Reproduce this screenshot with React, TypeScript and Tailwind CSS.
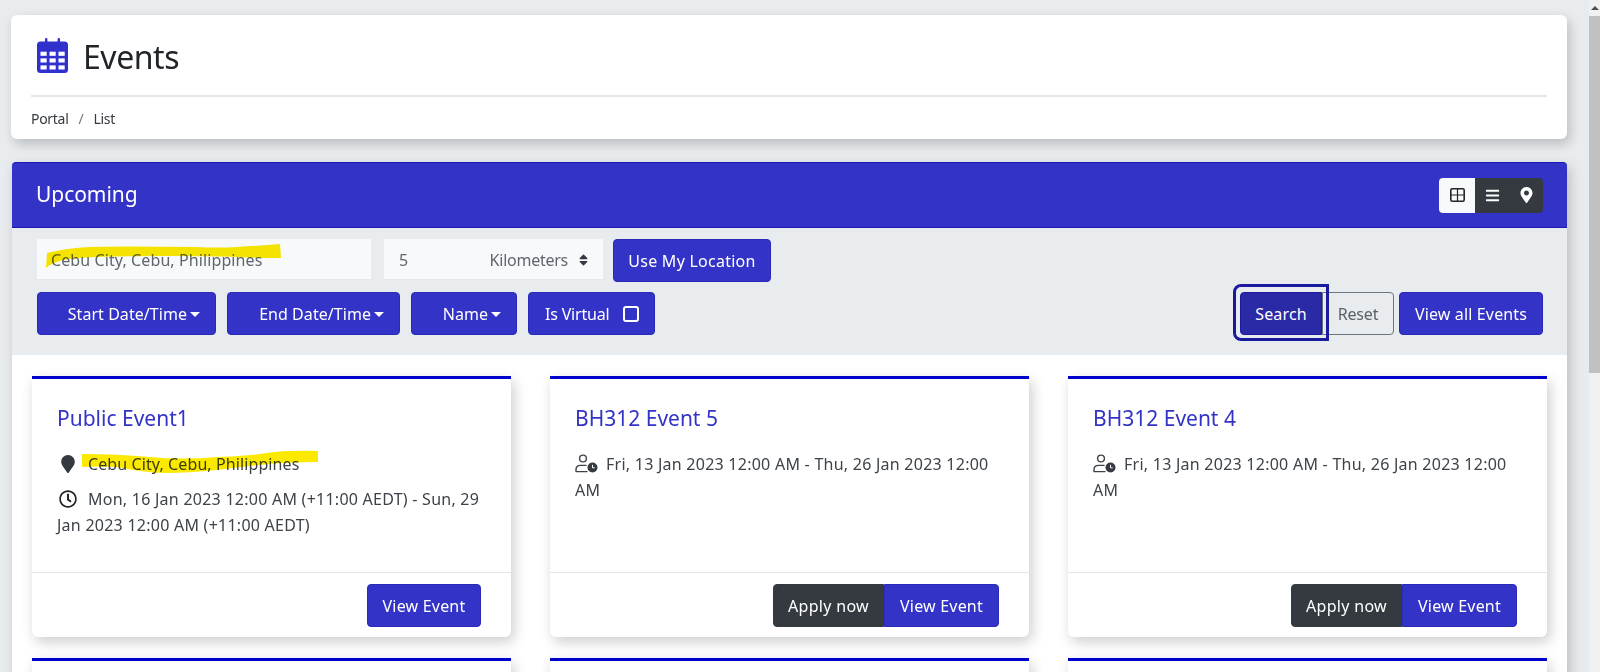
import { FaBars, FaMapMarker, FaMapMarkerAlt, FaRegClock, FaSort } from 'react-icons/fa';

const btn = 'flex items-center bg-[#3333c7] border border-[#2a2ab8] text-white text-base h-[43px] pt-px';

function Caret() {
  return <span className="ml-[3px] w-0 h-0 border-x-[5px] border-x-transparent border-t-[5px] border-t-white" />;
}

function Dropdown({ label, width }: { label: string; width: string }) {
  return (
    <button className={`${btn} ${width} rounded justify-end pr-[15px] tracking-[0.05px]`}>
      {label}
      <Caret />
    </button>
  );
}

function CalendarIcon() {
  const cols = [3.5, 12.5, 21.5];
  const rows = [13.7, 20.4, 27.4];
  return (
    <svg viewBox="0 0 31 35" className="w-[31px] h-[35px] shrink-0">
      <rect x="8" y="0" width="2.4" height="7" rx="1" fill="#3333c7" />
      <rect x="20.6" y="0" width="2.4" height="7" rx="1" fill="#3333c7" />
      <rect x="0" y="3.5" width="31" height="31.5" rx="3.5" fill="#3030cc" />
      {cols.map((x) => rows.map((y) => <rect key={`${x}-${y}`} x={x} y={y} width="6.2" height="4.1" fill="#fff" />))}
    </svg>
  );
}

function GridIcon() {
  return (
    <svg viewBox="0 0 15 14" className="w-[15px] h-[14px]">
      <rect x="0.8" y="0.8" width="13.4" height="12.4" rx="1.5" fill="none" stroke="#212529" strokeWidth="1.6" />
      <path d="M7.5 1v12M1 7h13" stroke="#212529" strokeWidth="1.2" />
    </svg>
  );
}

function UserClock() {
  return (
    <svg viewBox="0 0 23 19" className="w-[23px] h-[19px] shrink-0 inline-block align-[-3px]">
      <circle cx="8" cy="4.5" r="3.4" fill="none" stroke="#3d4349" strokeWidth="1.4" />
      <path d="M1 17.6v-2c0-2.6 2-4.2 4.6-4.2h5.4M1 17.6h11" fill="none" stroke="#3d4349" strokeWidth="1.4" strokeLinecap="round" />
      <circle cx="17.5" cy="13.5" r="5" fill="#343a40" />
      <path d="M17.5 10.8v3h2.2" fill="none" stroke="#fff" strokeWidth="1" />
    </svg>
  );
}

function CardFooter({ apply }: { apply?: boolean }) {
  return (
    <div className="h-[65px] border-t border-[#e6e6e6] flex items-center justify-end pr-[30px]">
      {apply && (
        <button className="h-[43px] w-[111px] pt-px bg-[#343a40] text-white text-base tracking-[0.3px] rounded-l border border-[#343a40]">Apply now</button>
      )}
      <button className={`${btn} ${apply ? 'w-[115px] rounded-r' : 'w-[114px] rounded'} justify-center tracking-[0.2px]`}>View Event</button>
    </div>
  );
}

function EventCard({ title, apply, children }: { title: string; apply?: boolean; children?: React.ReactNode }) {
  return (
    <div className="h-[261px] bg-white border-t-[3px] border-[#0000cc] rounded-b-md shadow-[3px_5px_14px_rgba(0,0,0,0.2)] flex flex-col">
      <div className="flex-1 px-[25px] pt-[24px] text-base leading-[26px] text-[#3d4349] tracking-[0.25px]">
        <h3 className="text-[21px] leading-[30px] text-[#3333c7] tracking-[0px] mb-[18px]">{title}</h3>
        {children}
      </div>
      <CardFooter apply={apply} />
    </div>
  );
}

function NextCard() {
  return <div className="h-[40px] bg-white border-t-[3px] border-[#0000cc] shadow-[3px_5px_14px_rgba(0,0,0,0.2)]" />;
}

export default function App() {
  return (
    <div className="h-[672px] w-full overflow-hidden flex bg-[#e9ecef] tracking-[0.15px]" style={{ fontFamily: '"Noto Sans", "Open Sans", sans-serif' }}>
      <div className="flex-1 min-w-0 pt-[15px] pl-[11px] pr-[22px]">
        <div className="h-[124px] bg-white rounded-md shadow-[3px_5px_12px_rgba(0,0,0,0.2)] px-[20px] flex flex-col">
          <div className="h-[82px] border-b-2 border-[#e4e6ea] flex items-center pl-[6px]">
            <CalendarIcon />
            <h1 className="ml-[15px] mt-[3px] text-[32px] text-[#212529] tracking-[-0.45px]">Events</h1>
          </div>
          <div className="flex-1 flex items-center gap-[10px] text-sm text-[#343a40] tracking-[-0.3px] pt-px">
            <span>Portal</span>
            <span className="text-[#6c757d]">/</span>
            <span>List</span>
          </div>
        </div>

        <div className="mt-[23px] ml-px shadow-[3px_5px_12px_rgba(0,0,0,0.2)]">
          <div className="h-[66px] bg-[#3333c7] border-y border-[#1a1ab8] rounded-t-sm flex items-center justify-between pl-[24px] pr-[24px]">
            <h2 className="text-[21px] text-white tracking-[-0.05px]">Upcoming</h2>
            <div className="flex h-[35px] w-[104px] rounded overflow-hidden bg-[#343a40] text-white">
              <span className="w-[36px] bg-[#f8f9fa] flex items-center justify-center"><GridIcon /></span>
              <span className="w-[34px] flex items-center justify-center"><FaBars className="w-[15px] h-[15px]" /></span>
              <span className="w-[34px] flex items-center justify-center"><FaMapMarkerAlt className="w-[13px] h-[16px]" /></span>
            </div>
          </div>

          <div className="h-[127px] bg-[#e9ecef] pl-[25px] pr-[24px] pt-[11px]">
            <div className="flex items-start h-[43px]">
              <div className="relative w-[334px] h-[41px] bg-[#f8f9fa] border-b border-[#e4e6ea] flex items-center pl-[14px] pt-[2px] text-base text-[#5f666d] tracking-[0.1px]">
                Cebu City, Cebu, Philippines
                <svg className="absolute left-0 top-0 mix-blend-multiply" width="334" height="41" viewBox="0 0 334 41">
                  <path d="M9 29L10 14Q30 9 53 8T160 8Q180 9 200 8T243 5L244 19Q220 19 200 18T133 17Q90 17 60 18T23 22Q14 24 9 29Z" fill="#fbe900" />
                </svg>
              </div>
              <div className="ml-[13px] w-[219px] h-[41px] bg-[#f8f9fa] border-b border-[#e4e6ea] flex items-center pl-[15px] pr-[14px] pt-[2px] text-base text-[#5f666d] tracking-[-0.25px]">
                <span>5</span>
                <span className="ml-auto">Kilometers</span>
                <FaSort className="ml-[10px] w-[11px] h-[14px] text-[#343a40]" />
              </div>
              <button className={`${btn} ml-[10px] w-[158px] justify-center rounded tracking-[0.25px]`}>Use My Location</button>
            </div>
            <div className="flex mt-[10px] gap-[11px]">
              <Dropdown label="Start Date/Time" width="w-[179px]" />
              <Dropdown label="End Date/Time" width="w-[173px]" />
              <Dropdown label="Name" width="w-[106px]" />
              <button className={`${btn} w-[127px] rounded pl-[16px] tracking-[-0.2px]`}>
                Is Virtual
                <span className="ml-[14px] w-[16px] h-[16px] rounded-[3px] border-2 border-white" />
              </button>
              <div className="ml-auto flex">
                <button className="relative h-[43px] w-[82px] pt-px bg-[#2a2aa6] border border-[#1a1a9e] text-white text-base rounded-l">
                  Search
                  <span className="absolute -left-[8px] -top-[9px] -right-[8px] -bottom-[7px] border-[3px] border-[#1a1a9e] rounded-l-lg z-10" />
                </button>
                <button className="h-[43px] w-[72px] pt-px border border-[#6c757d] text-[#5a6268] text-base rounded-r tracking-[-0.2px]">Reset</button>
                <button className={`${btn} ml-[5px] w-[144px] justify-center rounded`}>View all Events</button>
              </div>
            </div>
          </div>

          <div className="bg-white h-[400px] px-[20px] pt-[21px] grid grid-cols-3 gap-x-[39px] gap-y-[21px] content-start">
            <EventCard title="Public Event1">
              <div className="relative flex items-center h-[26px] mb-[9px] tracking-[0.1px]">
                <FaMapMarker className="ml-[4px] w-[14px] h-[18px] text-[#343a40]" />
                <span className="ml-[13px]">Cebu City, Cebu, Philippines</span>
                <svg className="absolute left-0 top-0 mix-blend-multiply overflow-visible" width="270" height="26" viewBox="0 0 270 26">
                  <path d="M25 3Q60 3 93 6T160 6Q190 5 210 2T261 0L261 11Q245 11 226 12T160 19Q130 22 110 22T60 16Q40 15 25 16Z" fill="#fbe900" />
                </svg>
              </div>
              <p>
                <FaRegClock className="inline-block ml-[2px] w-[18px] h-[18px] text-[#212529] align-[-3px] mr-[11px]" />
                Mon, 16 Jan 2023 12:00 AM (+11:00 AEDT) - Sun, 29 Jan 2023 12:00 AM (+11:00 AEDT)
              </p>
            </EventCard>
            <EventCard title="BH312 Event 5" apply>
              <p>
                <UserClock />
                <span className="ml-[8px]">Fri, 13 Jan 2023 12:00 AM - Thu, 26 Jan 2023 12:00 AM</span>
              </p>
            </EventCard>
            <EventCard title="BH312 Event 4" apply>
              <p>
                <UserClock />
                <span className="ml-[8px]">Fri, 13 Jan 2023 12:00 AM - Thu, 26 Jan 2023 12:00 AM</span>
              </p>
            </EventCard>
            <NextCard />
            <NextCard />
            <NextCard />
          </div>
        </div>
      </div>

      <div className="w-[11px] shrink-0 bg-[#f1f1f1] flex flex-col">
        <div className="h-[16px] flex items-center justify-center">
          <span className="w-0 h-0 border-x-[4px] border-x-transparent border-b-[4px] border-b-[#505050]" />
        </div>
        <div className="h-[357px] bg-[#c1c1c1]" />
      </div>
    </div>
  );
}
